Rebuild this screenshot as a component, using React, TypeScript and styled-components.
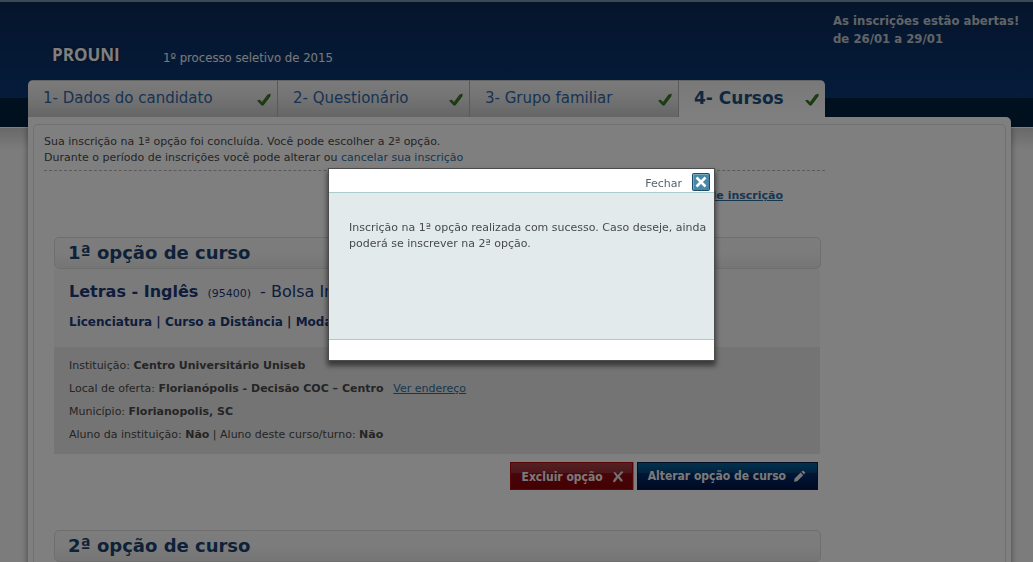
import React from "react";
import styled, { createGlobalStyle } from "styled-components";

const verdana = `Verdana, "DejaVu Sans", sans-serif`;
const tahoma = `Tahoma, "DejaVu Sans Condensed", "DejaVu Sans", sans-serif`;

const GlobalStyle = createGlobalStyle`
  *, *::before, *::after { box-sizing: border-box; }
  body { margin: 0; background: #f8f8f8; font: 11px/16px ${verdana}; color: #4a4a4a; }
  h1, h2, h3, p, ul, dl, dd { margin: 0; padding: 0; }
  button { margin: 0; font-family: inherit; cursor: pointer; }
`;

const Page = styled.div`
  min-height: 100vh;
  display: flex;
  flex-direction: column;
  overflow: hidden;
  background: linear-gradient(
    #7c93ad 0 2px,
    #0a2a58 2px,
    #0c3876 98px,
    #02203c 98px 127px,
    #ffffff 127px 128px,
    #d2d2d2 128px,
    #f8f8f8 150px
  );
`;

const Header = styled.header`
  height: 80px;
  flex: none;
  display: flex;
  align-items: flex-start;
  padding: 12px 15px 0 52px;
  color: #f2f2f2;
  font-family: ${tahoma};
`;

const Brand = styled.h1`
  width: 111px;
  margin-top: 31px;
  font: bold 17px/24px "Open Sans", sans-serif;
  color: #ffffff;
  text-shadow: 0 0 3px #001028;
`;

const Edition = styled.p`
  flex: 1;
  margin-top: 37px;
  font-size: 13px;
  line-height: 18px;
`;

const Notice = styled.p`
  width: 185px;
  font-size: 13px;
  font-weight: bold;
  line-height: 18px;
  white-space: nowrap;
  color: #c4c8cc;
`;

const Shell = styled.main`
  flex: 1;
  display: flex;
  flex-direction: column;
  margin: 0 22px 0 28px;
`;

const Tabs = styled.nav`
  display: grid;
  grid-template-columns: 250fr 192fr 209fr 146fr;
  max-width: 797px;
  height: 37px;
  border-radius: 5px 5px 0 0;
  overflow: hidden;
`;

const Tab = styled.a<{ $active?: boolean }>`
  display: flex;
  justify-content: space-between;
  padding: 7px 6px 0 15px;
  font-size: ${(p) => (p.$active ? 17 : 15)}px;
  line-height: 20px;
  font-weight: ${(p) => (p.$active ? "bold" : "normal")};
  color: ${(p) => (p.$active ? "#1c527e" : "#2f66a6")};
  text-decoration: none;
  white-space: nowrap;
  border-top: 1px solid #c8c8c8;
  border-right: ${(p) => (p.$active ? "0" : "1px solid #b0b4b6")};
  background: ${(p) =>
    p.$active ? "linear-gradient(#f2f2f2, #ffffff)" : "linear-gradient(#f6f6f6, #e6e6e6 50%, #c9cbcc)"};
  svg { flex: none; margin-top: 5px; }
`;

const Panel = styled.div`
  flex: 1;
  display: flex;
  padding: 7px 5px 0;
  background: #ffffff;
  border-radius: 0 5px 0 0;
  box-shadow: 0 8px 6px rgba(0, 0, 0, 0.45);
`;

const Content = styled.div`
  flex: 1;
  padding: 9px 10px 0;
  border: 1px solid #e2e2e2;
  border-bottom: 0;
  border-radius: 5px 5px 0 0;
`;

const Column = styled.div`
  max-width: 781px;
`;

const Intro = styled.div`
  height: 37px;
  border-bottom: 1px dashed #b4b4b4;
`;

const Link = styled.a<{ $underline?: boolean }>`
  color: #2f6f9f;
  text-decoration: ${(p) => (p.$underline ? "underline" : "none")};
`;

const ReceiptRow = styled.p`
  padding: 17px 42px 0 0;
  height: 66px;
  text-align: right;
  font-weight: bold;
`;

const Course = styled.section`
  margin: 0 4px 40px 10px;
  &:last-child { margin-bottom: 0; }
`;

const CourseTitle = styled.h2`
  height: 32px;
  padding-left: 13px;
  border: 1px solid #dcdcdc;
  border-radius: 5px;
  background: linear-gradient(#fafafa, #f8f8f8 50%, #ebebeb);
  font-size: 18px;
  line-height: 30px;
  color: #1b4470;
`;

const Summary = styled.div`
  height: 78px;
  padding: 12px 15px 0;
  background: #f7f7f7;
  color: #1c3a78;
  margin-right: 1px;
`;

const CourseName = styled.h3`
  font-size: 16px;
  line-height: 22px;
  font-weight: normal;
  small { margin: 0 4px; font-size: 11px; }
`;

const Modality = styled.p`
  margin-top: 8px;
  font-size: 12px;
  line-height: 18px;
  font-weight: bold;
`;

const Details = styled.dl`
  margin: 0 1px 0 0;
  padding: 7px 15px 8px;
  background: #e9e9e9;
  line-height: 23px;
`;

const Detail = styled.div`
  dt, dd { display: inline; }
  dd { font-weight: bold; }
  a { margin-left: 6px; font-weight: normal; }
`;

const Actions = styled.div`
  display: flex;
  justify-content: flex-end;
  gap: 4px;
  padding: 8px 3px 0 0;
`;

const ActionButton = styled.button<{ $tone: "red" | "blue" }>`
  height: 28px;
  display: flex;
  align-items: center;
  gap: 8px;
  padding: ${(p) => (p.$tone === "red" ? "2px 7px 0 11px" : "0 11px 0 10px")};
  border: 1px solid ${(p) => (p.$tone === "red" ? "#b00a14" : "#021c4c")};
  background: ${(p) =>
    p.$tone === "red"
      ? "linear-gradient(#a84040, #983038 38%, #900c14 40%, #880004)"
      : "linear-gradient(#04649c, #04447c 38%, #022c6c 40%, #001448)"};
  box-shadow: ${(p) => (p.$tone === "red" ? "1px 0 0 #a8a8a8" : "none")};
  font: bold 12px/16px ${tahoma};
  color: #f4f4f4;
  white-space: nowrap;
`;

const Overlay = styled.div`
  position: fixed;
  inset: 0;
  display: flex;
  justify-content: center;
  align-items: flex-start;
  padding: 168px 0 0 10px;
  background: rgba(0, 0, 0, 0.5);
`;

const Dialog = styled.div`
  width: 387px;
  border: 1px solid #4c4c4c;
  background: #ffffff;
  box-shadow: 0 4px 5px 1px rgba(0, 0, 0, 0.5);
`;

const DialogBar = styled.div`
  display: flex;
  justify-content: flex-end;
  height: 24px;
  padding: 4px 4px 0 0;
  border-bottom: 1px solid #a9cccc;
`;

const CloseButton = styled.button`
  display: flex;
  align-items: flex-start;
  gap: 10px;
  height: 18px;
  padding: 0;
  border: 0;
  background: none;
  font: 11px/22px ${verdana};
  color: #55646e;
`;

const DialogBody = styled.p`
  min-height: 147px;
  padding: 27px 0 0 20px;
  border-bottom: 1px solid #a9cccc;
  background: #e2eaeb;
  color: #4a4a4a;
`;

const DialogFoot = styled.div`
  height: 20px;
`;

const CheckIcon = () => (
  <svg width="14" height="14" viewBox="0 0 14 14" aria-hidden="true">
    <path d="M0 7.6 2.8 6.8 5 9 10.4 1.8 13.6 .4 13.4 3.2 6.4 12.6H4.6Z" fill="#32701f" />
    <path d="M2.4 8 5 10.6 11.6 2.6" fill="none" stroke="#468c30" strokeWidth="1" />
  </svg>
);

const RemoveIcon = () => (
  <svg width="14" height="14" viewBox="0 0 14 14" aria-hidden="true">
    <path d="M2.4 2.4 4 2 7 5 10 1.6 12 1.4 12.2 2.4 8.6 6.2 11.6 10 11.4 11.6 9.8 11.4 7 8 3.8 12.2 2.2 12 2.2 10.2 5.2 6.4Z" fill="#e0e0e0" />
  </svg>
);

const PencilIcon = () => (
  <svg width="12" height="12" viewBox="0 0 12 12" aria-hidden="true">
    <path d="M0 11.8 .6 8.6 6.6 2.6 9.2 5.2 3.2 11.2ZM7.4 1.8 9 .4 11.4 2.6 10 4.4Z" fill="#ececec" />
  </svg>
);

const CloseIcon = () => (
  <svg width="18" height="18" viewBox="0 0 18 18" aria-hidden="true">
    <rect x=".5" y=".5" width="17" height="17" rx="1" fill="#4688a8" stroke="#1c4c68" />
    <path d="M1.5 16V1.5H16" fill="none" stroke="#78aac2" />
    <path d="M4.5 4.5 13.5 13.5M13.5 4.5 4.5 13.5" stroke="#ffffff" strokeWidth="2.6" />
  </svg>
);

const steps = [
  { label: "1- Dados do candidato" },
  { label: "2- Questionário" },
  { label: "3- Grupo familiar" },
  { label: "4- Cursos", active: true },
];

export default function App() {
  return (
    <>
      <GlobalStyle />
      <Page>
        <Header>
          <Brand>PROUNI</Brand>
          <Edition>1º processo seletivo de 2015</Edition>
          <Notice>
            As inscrições estão abertas!
            <br />
            de 26/01 a 29/01
          </Notice>
        </Header>
        <Shell>
          <Tabs>
            {steps.map((s) => (
              <Tab key={s.label} href="#" $active={s.active}>
                {s.label}
                <CheckIcon />
              </Tab>
            ))}
          </Tabs>
          <Panel>
            <Content>
              <Column>
                <Intro>
                  <p>Sua inscrição na 1ª opção foi concluída. Você pode escolher a 2ª opção.</p>
                  <p>
                    Durante o período de inscrições você pode alterar ou <Link href="#">cancelar sua inscrição</Link>
                  </p>
                </Intro>
                <ReceiptRow>
                  <Link href="#" $underline>Comprovante de inscrição</Link>
                </ReceiptRow>
                <Course>
                  <CourseTitle>1ª opção de curso</CourseTitle>
                  <Summary>
                    <CourseName>
                      <b>Letras - Inglês</b> <small>(95400)</small> - Bolsa Integral
                    </CourseName>
                    <Modality>Licenciatura | Curso a Distância | Modalidade</Modality>
                  </Summary>
                  <Details>
                    <Detail>
                      <dt>Instituição: </dt>
                      <dd>Centro Universitário Uniseb</dd>
                    </Detail>
                    <Detail>
                      <dt>Local de oferta: </dt>
                      <dd>
                        Florianópolis - Decisão COC – Centro <Link href="#" $underline>Ver endereço</Link>
                      </dd>
                    </Detail>
                    <Detail>
                      <dt>Município: </dt>
                      <dd>Florianopolis, SC</dd>
                    </Detail>
                    <Detail>
                      <dt>Aluno da instituição: </dt>
                      <dd>Não</dd>
                      <dt> | Aluno deste curso/turno: </dt>
                      <dd>Não</dd>
                    </Detail>
                  </Details>
                  <Actions>
                    <ActionButton $tone="red">
                      Excluir opção
                      <RemoveIcon />
                    </ActionButton>
                    <ActionButton $tone="blue">
                      Alterar opção de curso
                      <PencilIcon />
                    </ActionButton>
                  </Actions>
                </Course>
                <Course>
                  <CourseTitle>2ª opção de curso</CourseTitle>
                </Course>
              </Column>
            </Content>
          </Panel>
        </Shell>
      </Page>
      <Overlay>
        <Dialog role="dialog" aria-modal="true">
          <DialogBar>
            <CloseButton>
              Fechar
              <CloseIcon />
            </CloseButton>
          </DialogBar>
          <DialogBody>
            Inscrição na 1ª opção realizada com sucesso. Caso deseje, ainda poderá se inscrever na 2ª opção.
          </DialogBody>
          <DialogFoot />
        </Dialog>
      </Overlay>
    </>
  );
}
